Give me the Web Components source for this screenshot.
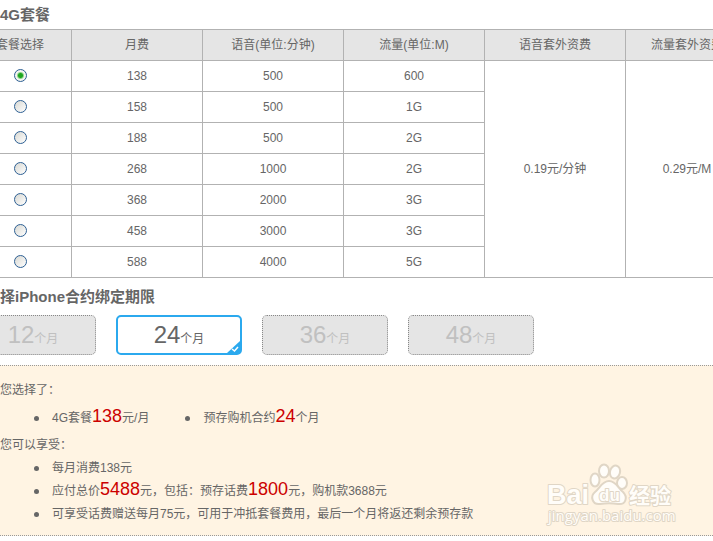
<!DOCTYPE html>
<html lang="zh-CN">
<head>
<meta charset="utf-8">
<title>4G套餐</title>
<style>
  body {
    margin: 0;
    background: #fff;
    color: #666;
    font: 12px/23px "Liberation Sans", "Noto Sans CJK SC", sans-serif;
    overflow: hidden;
  }
</style>
</head>
<body>
<plan-page>
  <section-title>4G套餐</section-title>
  <plan-table></plan-table>
  <section-title size="large">择iPhone合约绑定期限</section-title>
  <term-picker>
    <term-option months="12"></term-option>
    <term-option months="24" selected></term-option>
    <term-option months="36"></term-option>
    <term-option months="48"></term-option>
  </term-picker>
  <order-summary>
    <summary-list heading="您选择了：" inline>
      <summary-item>4G套餐<hot-number>138</hot-number>元/月</summary-item>
      <summary-item>预存购机合约<hot-number>24</hot-number>个月</summary-item>
    </summary-list>
    <summary-list heading="您可以享受：">
      <summary-item>每月消费138元</summary-item>
      <summary-item>应付总价<hot-number>5488</hot-number>元，包括：预存话费<hot-number>1800</hot-number>元，购机款3688元</summary-item>
      <summary-item>可享受话费赠送每月75元，可用于冲抵套餐费用，最后一个月将返还剩余预存款</summary-item>
    </summary-list>
    <site-mark slot="mark"></site-mark>
  </order-summary>
</plan-page>

<script>
class BaseElement extends HTMLElement {
  constructor() {
    super();
    this.attachShadow({ mode: 'open' });
  }

  connectedCallback() {
    this.shadowRoot.innerHTML = this.render().trim();
  }
}

class PlanPage extends BaseElement {
  render() {
    return `
      <style>
        :host { display: block; overflow: hidden; }
      </style>
      <slot></slot>
    `;
  }
}

class SectionTitle extends BaseElement {
  render() {
    const height = this.getAttribute('size') === 'large' ? '37px' : '29px';
    return `
      <style>
        :host { display: block; }
        h2 {
          margin: 0;
          font-size: 15px;
          line-height: ${height};
          font-weight: bold;
        }
      </style>
      <h2><slot></slot></h2>
    `;
  }
}

const PLANS = [
  ['138', '500', '600'],
  ['158', '500', '1G'],
  ['188', '500', '2G'],
  ['268', '1000', '2G'],
  ['368', '2000', '3G'],
  ['458', '3000', '3G'],
  ['588', '4000', '5G']
];

class PlanTable extends BaseElement {
  render() {
    const rows = PLANS.map(([fee, voice, data], i) => `
      <tr>
        <td><input type="radio" name="plan" value="${fee}" aria-label="${fee}" ${i === 0 ? 'checked' : ''}></td>
        <td>${fee}</td>
        <td>${voice}</td>
        <td>${data}</td>
        ${i === 0 ? `<td rowspan="${PLANS.length}">0.19元/分钟</td><td rowspan="${PLANS.length}">0.29元/M</td>` : ''}
      </tr>
    `).join('');

    return `
      <style>
        /* the table is wider than the page on both sides */
        :host { display: block; margin: 0 -36px 0 -31px; }
        table {
          width: 100%;
          table-layout: fixed;
          border-collapse: separate;
          border-spacing: 0;
          border-top: 1px solid #b2b2b2;
        }
        .select { width: 103px; }
        .fee { width: 131px; }
        .wide { width: 141px; }
        th, td {
          box-sizing: border-box;
          height: 31px;
          padding: 0;
          border-right: 1px solid #b2b2b2;
          border-bottom: 1px solid #b2b2b2;
          font-weight: normal;
          line-height: 20px;
          text-align: center;
          vertical-align: middle;
        }
        th { background: #e5e5e5; }
        input {
          appearance: none;
          display: block;
          box-sizing: border-box;
          width: 13px;
          height: 13px;
          margin: 0 auto 1px;
          border: 1px solid #2d5f93;
          border-radius: 50%;
          background: linear-gradient(135deg, #d8d8d2, #fff);
        }
        input:checked {
          background: radial-gradient(circle, #1fa51f 0 2px, #8ed68a 3px, #f4f4f0 4px);
        }
      </style>
      <table>
        <colgroup>
          <col class="select"><col class="fee"><col class="wide"><col class="wide"><col class="wide"><col>
        </colgroup>
        <thead>
          <tr>
            <th>套餐选择</th>
            <th>月费</th>
            <th>语音(单位:分钟)</th>
            <th>流量(单位:M)</th>
            <th>语音套外资费</th>
            <th>流量套外资费</th>
          </tr>
        </thead>
        <tbody>${rows}</tbody>
      </table>
    `;
  }
}

class TermPicker extends BaseElement {
  render() {
    return `
      <style>
        :host {
          display: flex;
          gap: 20px;
          margin: 0 0 10px -30px;
        }
      </style>
      <slot></slot>
    `;
  }
}

class TermOption extends BaseElement {
  render() {
    const selected = this.hasAttribute('selected');
    return `
      <style>
        :host { display: block; flex: none; }
        button {
          position: relative;
          box-sizing: border-box;
          display: flex;
          align-items: baseline;
          justify-content: center;
          width: 126px;
          height: 40px;
          padding: 0;
          border: 1px dotted #888;
          border-radius: 5px;
          background: #e5e5e5;
          color: #c0c0c0;
          font: inherit;
          line-height: 38px;
        }
        button.on {
          border: 2px solid #2ba9ee;
          background: #fff;
          color: #666;
          line-height: 36px;
        }
        b { font-size: 24px; font-weight: normal; }
        svg { position: absolute; right: 0; bottom: 0; }
      </style>
      <button type="button" class="${selected ? 'on' : ''}" aria-pressed="${selected}">
        <b>${this.getAttribute('months')}</b><span>个月</span>
        ${selected ? `
          <svg width="13" height="12" viewBox="0 0 13 12" aria-hidden="true">
            <path d="M13 0V12H0Z" fill="#2ba9ee"/>
            <path d="M5 8l2.500 2L11 6" fill="none" stroke="#fff" stroke-width="1.500"/>
          </svg>` : ''}
      </button>
    `;
  }
}

class OrderSummary extends BaseElement {
  render() {
    return `
      <style>
        :host {
          display: block;
          position: relative;
          padding: 12px 0 9px;
          border-top: 1px dotted #999;
          border-bottom: 1px dotted #999;
          background: #fff4e3;
        }
        ::slotted(site-mark) { position: absolute; right: 36px; bottom: 8px; }
      </style>
      <slot></slot>
      <slot name="mark"></slot>
    `;
  }
}

class SummaryList extends BaseElement {
  render() {
    return `
      <style>
        :host { display: block; }
        p { margin: 0; line-height: 23px; }
        div { padding-left: 34px; }
        :host([inline]) p { line-height: 24px; }
        :host([inline]) div {
          display: flex;
          gap: 36px;
          line-height: 32px;
        }
      </style>
      <p>${this.getAttribute('heading')}</p>
      <div role="list"><slot></slot></div>
    `;
  }
}

class SummaryItem extends BaseElement {
  connectedCallback() {
    super.connectedCallback();
    this.setAttribute('role', 'listitem');
  }

  render() {
    return `
      <style>
        :host {
          display: flex;
          align-items: center;
          gap: 13px;
          white-space: nowrap;
        }
        :host::before {
          content: "";
          width: 5px;
          height: 5px;
          border-radius: 50%;
          background: #666;
        }
      </style>
      <span><slot></slot></span>
    `;
  }
}

class HotNumber extends BaseElement {
  render() {
    // no whitespace round the slot: the number sits inside a sentence
    return `<style>:host { color: #c00; font-size: 18px; line-height: 0; }</style><slot></slot>`;
  }
}

class SiteMark extends BaseElement {
  render() {
    return `
      <style>
        :host { display: block; pointer-events: none; }
        svg { display: block; }
        text { paint-order: stroke; }
        .name { font: bold 27px "Liberation Sans", sans-serif; }
        .du { font: bold 17px "Liberation Sans", sans-serif; }
        .cn { font: bold 21px "Noto Sans CJK SC", sans-serif; }
        .url { font: 15px "Open Sans", sans-serif; }
      </style>
      <svg width="132" height="66" viewBox="0 0 132 66" fill="#fffdf9" stroke="#e0d6c6" stroke-width="2" stroke-linejoin="round">
        <ellipse cx="50" cy="19" rx="4.500" ry="6.500"/>
        <ellipse cx="59" cy="10" rx="5" ry="6.500"/>
        <ellipse cx="70" cy="11" rx="5" ry="6.500" transform="rotate(15 70 11)"/>
        <ellipse cx="77" cy="22" rx="5" ry="6"/>
        <path d="M64 20C57 20 55 27 50 31C45 35 47 44 55 43C61 42 67 42 73 43C81 44 83 36 78 31C73 27 71 20 64 20Z"/>
        <text class="name" x="2" y="43">Bai</text>
        <text class="du" x="54" y="40">du</text>
        <text class="cn" x="84" y="42">经验</text>
        <text class="url" x="3" y="60">jingyan.baidu.com</text>
      </svg>
    `;
  }
}

customElements.define('plan-page', PlanPage);
customElements.define('section-title', SectionTitle);
customElements.define('plan-table', PlanTable);
customElements.define('term-picker', TermPicker);
customElements.define('term-option', TermOption);
customElements.define('order-summary', OrderSummary);
customElements.define('summary-list', SummaryList);
customElements.define('summary-item', SummaryItem);
customElements.define('hot-number', HotNumber);
customElements.define('site-mark', SiteMark);
</script>
</body>
</html>
